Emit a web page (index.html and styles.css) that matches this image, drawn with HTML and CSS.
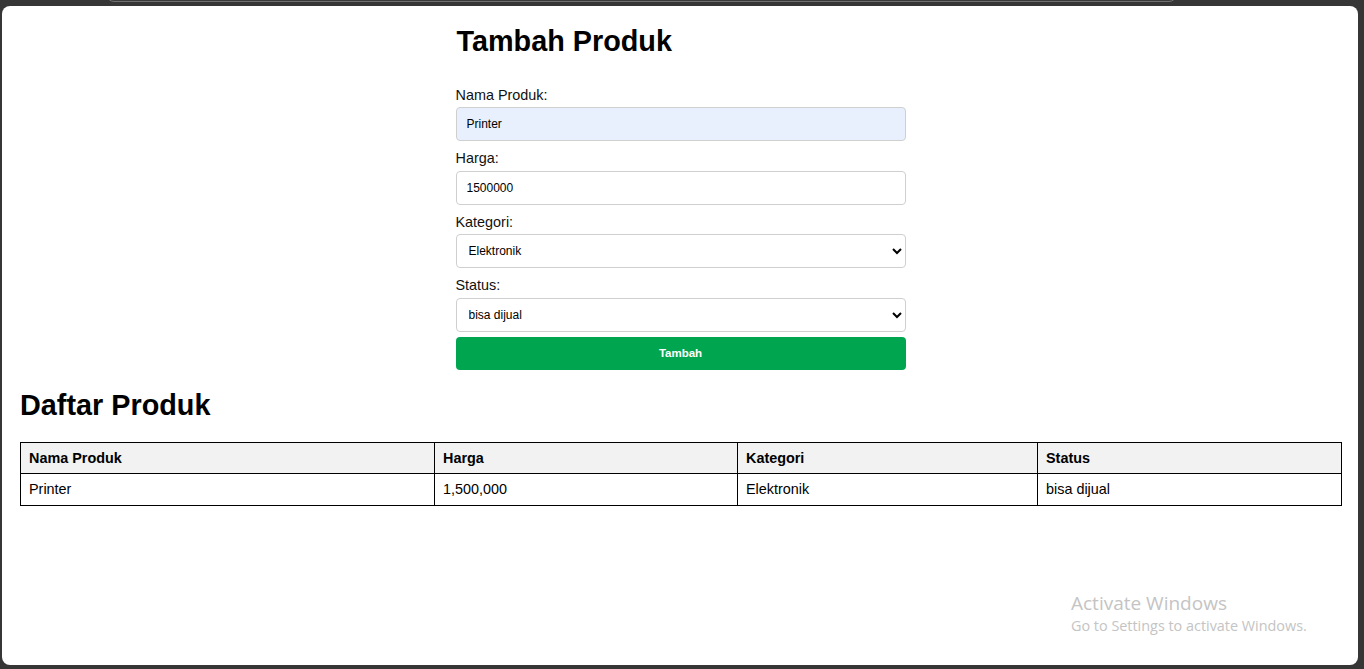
FILE: index.html
```html
<!DOCTYPE html>
<html lang="id">
<head>
<meta charset="utf-8">
<title>Produk</title>
<link rel="stylesheet" href="styles.css">
</head>
<body>
<div class="screen">
  <div class="tabline"></div>
  <div class="window">
    <main class="page">
      <section class="form-card">
        <h2 class="title">Tambah Produk</h2>
        <form class="form">
          <label class="label" for="nama">Nama Produk:</label>
          <input class="field field-autofill" id="nama" type="text" value="Printer">
          <label class="label" for="harga">Harga:</label>
          <input class="field" id="harga" type="text" value="1500000">
          <label class="label" for="kategori">Kategori:</label>
          <select class="field field-select" id="kategori">
            <option>Elektronik</option>
          </select>
          <label class="label" for="status">Status:</label>
          <select class="field field-select field-last" id="status">
            <option>bisa dijual</option>
          </select>
          <button class="btn" type="button">Tambah</button>
        </form>
      </section>
      <h2 class="title title-list">Daftar Produk</h2>
      <table class="table">
        <colgroup>
          <col class="col-1"><col class="col-2"><col class="col-3"><col class="col-4">
        </colgroup>
        <thead>
          <tr><th>Nama Produk</th><th>Harga</th><th>Kategori</th><th>Status</th></tr>
        </thead>
        <tbody>
          <tr><td>Printer</td><td>1,500,000</td><td>Elektronik</td><td>bisa dijual</td></tr>
        </tbody>
      </table>
    </main>
    <div class="watermark">
      <div class="wm-title">Activate Windows</div>
      <div class="wm-sub">Go to Settings to activate Windows.</div>
    </div>
  </div>
</div>
</body>
</html>
```
FILE: styles.css
```css
* { box-sizing: border-box; }
html, body { margin: 0; padding: 0; }
body {
  background: #363636;
  font-family: "Liberation Sans", Arial, sans-serif;
  color: #000;
}
.screen {
  position: relative;
  width: 1364px;
  height: 669px;
  overflow: hidden;
  background: #363636;
  padding: 6px 6px 4px 2px;
}
.tabline {
  position: absolute;
  top: -10px;
  left: 106px;
  width: 1071px;
  height: 12px;
  border: 1px solid #707070;
  border-radius: 0 0 8px 8px;
  background: #3a3a3a;
}
.window {
  position: relative;
  width: 1356px;
  height: 659px;
  background: #fff;
  border-radius: 8px;
}
.page {
  padding: 19px 17px 0 18px;
}
.form-card {
  width: 450px;
  margin: 0 auto;
}
.title {
  margin: 0 0 29.5px;
  font-size: 28.8px;
  line-height: 32px;
  font-weight: bold;
  padding-left: 1px;
}
.title-list {
  margin: 19px 0 21px;
  padding-left: 0;
}
.form { display: block; }
.label {
  display: block;
  font-size: 14.4px;
  line-height: 16.5px;
  margin-bottom: 4px;
  color: #111;
}
.field {
  display: block;
  width: 100%;
  height: 34px;
  margin: 0 0 9px;
  padding: 0 10px;
  border: 1px solid #cfcfcf;
  border-radius: 4px;
  background: #fff;
  font-family: "Liberation Sans", Arial, sans-serif;
  font-size: 12px;
  color: #000;
  outline: none;
}
.field-autofill { background: #e8f0fe; }
.field-select { padding: 0 8px; }
.field-last { margin-bottom: 5px; }
.btn {
  display: block;
  width: 100%;
  height: 33px;
  border: none;
  border-radius: 4px;
  background: #00a64f;
  color: #fff;
  font-family: "Liberation Sans", Arial, sans-serif;
  font-size: 11.5px;
  font-weight: bold;
}
.table {
  width: 100%;
  border-collapse: collapse;
  table-layout: fixed;
  font-size: 14.4px;
}
.col-1 { width: 414px; }
.col-2 { width: 303px; }
.col-3 { width: 300px; }
.col-4 { width: 304px; }
.table th, .table td {
  border: 1px solid #000;
  padding: 7px 8px;
  line-height: 16.5px;
  text-align: left;
}
.table th {
  background: #f2f2f2;
  font-weight: bold;
}
.watermark {
  position: absolute;
  left: 1069px;
  top: 585px;
  color: #c4c4c4;
  font-family: "Open Sans", "Noto Sans", sans-serif;
}
.wm-title {
  font-size: 19px;
  line-height: 24px;
}
.wm-sub {
  font-size: 14.4px;
  line-height: 20px;
  margin-top: 1px;
}
```
